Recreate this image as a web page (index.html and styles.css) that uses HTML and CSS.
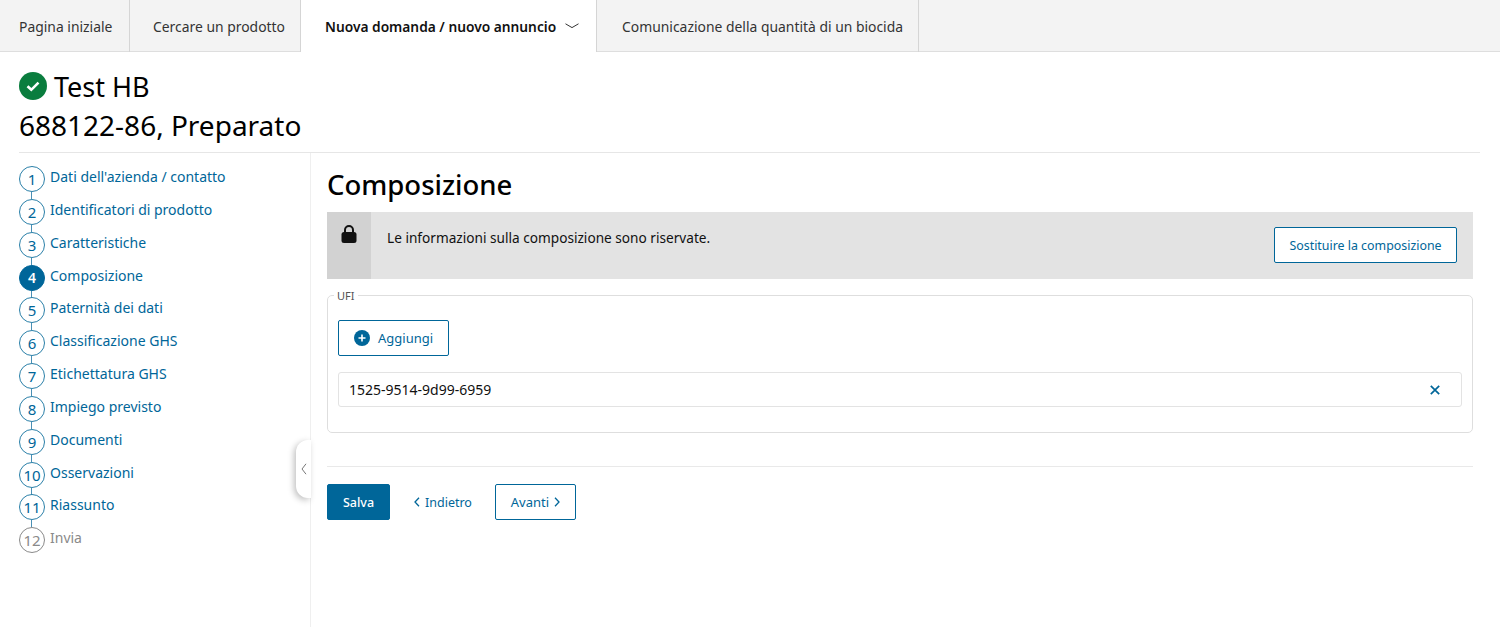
FILE: index.html
```html
<!DOCTYPE html>
<html lang="it">
<head>
<meta charset="utf-8">
<title>Composizione</title>
<link rel="stylesheet" href="styles.css">
</head>
<body>
<nav class="tabs">
  <a class="tab tab-home">Pagina iniziale</a>
  <a class="tab tab-search">Cercare un prodotto</a>
  <a class="tab tab-active">Nuova domanda / nuovo annuncio
    <svg class="tab-chevron" width="14" height="6" viewBox="0 0 14 6"><path d="M.5.8 7 4.6 13.5.8" fill="none" stroke="#333" stroke-width="1"/></svg>
  </a>
  <a class="tab tab-biocide">Comunicazione della quantità di un biocida</a>
</nav>
<header class="page-head">
  <h1 class="title-line">
    <svg class="status-icon" width="28" height="28" viewBox="0 0 28 28"><circle cx="14" cy="14" r="14" fill="#0a7d3e"/><path d="M8.5 14.2l3.8 3.6 7.2-7.2" fill="none" stroke="#fff" stroke-width="2.6"/></svg>
    Test HB
  </h1>
  <h1 class="title-line title-second">688122-86, Preparato</h1>
</header>
<div class="layout">
  <aside class="sidebar">
    <ol class="steps">
      <li class="step"><span class="num">1</span><a>Dati dell'azienda / contatto</a></li>
      <li class="step"><span class="num">2</span><a>Identificatori di prodotto</a></li>
      <li class="step"><span class="num">3</span><a>Caratteristiche</a></li>
      <li class="step current"><span class="num">4</span><a>Composizione</a></li>
      <li class="step"><span class="num">5</span><a>Paternità dei dati</a></li>
      <li class="step"><span class="num">6</span><a>Classificazione GHS</a></li>
      <li class="step"><span class="num">7</span><a>Etichettatura GHS</a></li>
      <li class="step"><span class="num">8</span><a>Impiego previsto</a></li>
      <li class="step"><span class="num">9</span><a>Documenti</a></li>
      <li class="step"><span class="num">10</span><a>Osservazioni</a></li>
      <li class="step"><span class="num">11</span><a>Riassunto</a></li>
      <li class="step disabled"><span class="num">12</span><a>Invia</a></li>
    </ol>
    <button class="collapse" aria-label="Comprimi">
      <svg width="6" height="12" viewBox="0 0 6 12"><path d="M5 .8 1 6l4 5.2" fill="none" stroke="#777" stroke-width="1"/></svg>
    </button>
  </aside>
  <main class="content">
    <h2 class="section-title">Composizione</h2>
    <div class="notice">
      <div class="notice-icon">
        <svg width="16" height="18" viewBox="0 0 16 18"><path d="M4 8V5a4 4 0 0 1 8 0v3" fill="none" stroke="#111" stroke-width="2"/><rect x=".5" y="7" width="15" height="11" rx="2.5" fill="#111"/></svg>
      </div>
      <p class="notice-text">Le informazioni sulla composizione sono riservate.</p>
      <button class="btn btn-replace">Sostituire la composizione</button>
    </div>
    <fieldset class="ufi">
      <legend class="ufi-legend">UFI</legend>
      <button class="btn btn-add">
        <svg width="16" height="16" viewBox="0 0 16 16"><circle cx="8" cy="8" r="8" fill="#006699"/><path d="M8 4.5v7M4.5 8h7" stroke="#fff" stroke-width="1.6"/></svg>
        Aggiungi
      </button>
      <div class="ufi-row">
        <span>1525-9514-9d99-6959</span>
        <svg width="10" height="10" viewBox="0 0 10 10"><path d="M.8.8l8.4 8.4M9.2.8.8 9.2" stroke="#006699" stroke-width="1.7"/></svg>
      </div>
    </fieldset>
    <div class="actions">
      <button class="btn btn-primary">Salva</button>
      <a class="back">
        <svg width="6" height="10" viewBox="0 0 6 10"><path d="M5 .8 1 5l4 4.2" fill="none" stroke="#006699" stroke-width="1.3"/></svg>
        Indietro
      </a>
      <button class="btn btn-next">Avanti
        <svg width="6" height="10" viewBox="0 0 6 10"><path d="M1 .8 5 5 1 9.2" fill="none" stroke="#006699" stroke-width="1.3"/></svg>
      </button>
    </div>
  </main>
</div>
</body>
</html>
```
FILE: styles.css
```css
* { box-sizing: border-box; }
html, body { height: 100%; }
body {
  margin: 0;
  height: 627px;
  overflow: hidden;
  background: #fff;
  color: #111;
  font-family: "Noto Sans", "Open Sans", sans-serif;
  font-size: 14px;
}
.tabs {
  display: flex;
  height: 52px;
  background: #f3f3f3;
  border-bottom: 1px solid #dedede;
}
.tab {
  display: flex;
  align-items: center;
  height: 52px;
  color: #333;
  font-size: 13.9px;
  border-right: 1px solid #d5d5d5;
  white-space: nowrap;
}
.tab-home { width: 130px; padding-left: 19px; }
.tab-search { width: 171px; padding-left: 23px; }
.tab-active {
  width: 296px;
  padding-left: 24px;
  background: #fff;
  color: #111;
  font-size: 13.75px;
  font-weight: 600;
}
.tab-chevron { margin-left: 9px; }
.tab-biocide { width: 322px; padding-left: 25px; }
.page-head {
  margin: 0 20px 0 19px;
  padding-top: 15px;
  height: 101px;
  border-bottom: 1px solid #e6e6e6;
}
.title-line {
  display: flex;
  align-items: center;
  margin: 0;
  height: 38px;
  font-size: 27px;
  font-weight: 400;
  color: #000;
}
.title-second { height: 40px; font-size: 28px; }
.status-icon { margin-right: 7px; }
.layout {
  display: flex;
  height: 474px;
  padding-left: 19px;
}
.sidebar {
  position: relative;
  width: 292px;
  flex: none;
  padding-top: 13px;
  border-right: 1px solid #efefef;
}
.steps { list-style: none; margin: 0; padding: 0; }
.step {
  position: relative;
  display: flex;
  height: 32.85px;
  color: #006699;
}
.step:not(:last-child)::after {
  content: "";
  position: absolute;
  left: 12px;
  top: 26px;
  width: 1px;
  height: 7px;
  background: #4a90b5;
}
.num {
  flex: none;
  display: flex;
  align-items: center;
  justify-content: center;
  width: 26px;
  height: 26px;
  margin-right: 5px;
  border: 1.5px solid #2a7fa8;
  border-radius: 50%;
  font-size: 15px;
  color: #006699;
}
.step a { margin-top: 1px; font-size: 14px; line-height: 20px; }
.current .num { background: #006699; border-color: #006699; color: #fff; font-weight: 600; font-size: 14px; }
.disabled, .disabled .num { color: #8a8a8a; border-color: #8a8a8a; }
.collapse {
  position: absolute;
  right: -1px;
  top: 287px;
  display: flex;
  align-items: center;
  width: 15px;
  height: 58px;
  padding: 0 0 0 5px;
  background: #fff;
  border: 0;
  border-radius: 12px 0 0 12px;
  box-shadow: -2px 2px 6px rgba(0, 0, 0, .25);
}
.content {
  flex: none;
  width: 1146px;
  margin-left: 16px;
}
.section-title {
  margin: 13px 0 0;
  height: 46px;
  font-size: 27.5px;
  line-height: 38px;
  font-weight: 500;
  color: #000;
}
.notice {
  display: flex;
  align-items: flex-start;
  height: 67px;
  background: #e3e3e3;
}
.notice-icon {
  display: flex;
  justify-content: center;
  flex: none;
  width: 44px;
  height: 67px;
  padding-top: 13px;
  background: #d2d2d2;
}
.notice-text {
  flex: 1;
  margin: 16px 0 0 16px;
  font-size: 13.65px;
  line-height: 20px;
  color: #111;
}
.btn {
  font-family: inherit;
  font-size: 13px;
  color: #006699;
  background: #fff;
  border: 1px solid #006699;
  border-radius: 2px;
}
.btn-replace {
  width: 183px;
  height: 36px;
  margin: 15px 16px 0 0;
  padding: 0;
  font-size: 12.4px;
  white-space: nowrap;
}
.ufi {
  margin: 10px 0 0;
  padding: 18px 10px 0;
  height: 144px;
  border: 1px solid #dedede;
  border-radius: 5px;
}
.ufi-legend {
  margin-left: -4px;
  padding: 0 4px 0 3px;
  font-size: 11px;
  line-height: 13px;
  color: #555;
}
.btn-add {
  display: flex;
  align-items: center;
  gap: 8px;
  width: 111px;
  height: 36px;
  padding: 0 0 0 15px;
}
.ufi-row {
  display: flex;
  align-items: center;
  justify-content: space-between;
  height: 35px;
  margin-top: 16px;
  padding: 0 21px 0 10px;
  border: 1px solid #e3e3e3;
  border-radius: 3px;
  font-size: 14px;
  color: #111;
}
.actions {
  display: flex;
  align-items: center;
  margin-top: 33px;
  padding-top: 17px;
  border-top: 1px solid #e9e9e9;
}
.btn-primary {
  width: 63px;
  height: 36px;
  padding: 0;
  background: #006699;
  color: #fff;
  font-size: 12.5px;
  font-weight: 500;
}
.back {
  display: flex;
  align-items: center;
  gap: 5px;
  margin-left: 24px;
  color: #006699;
  font-size: 12.5px;
}
.btn-next {
  display: flex;
  align-items: center;
  justify-content: center;
  gap: 5px;
  width: 81px;
  height: 36px;
  margin-left: 23px;
  padding: 0;
}
```
